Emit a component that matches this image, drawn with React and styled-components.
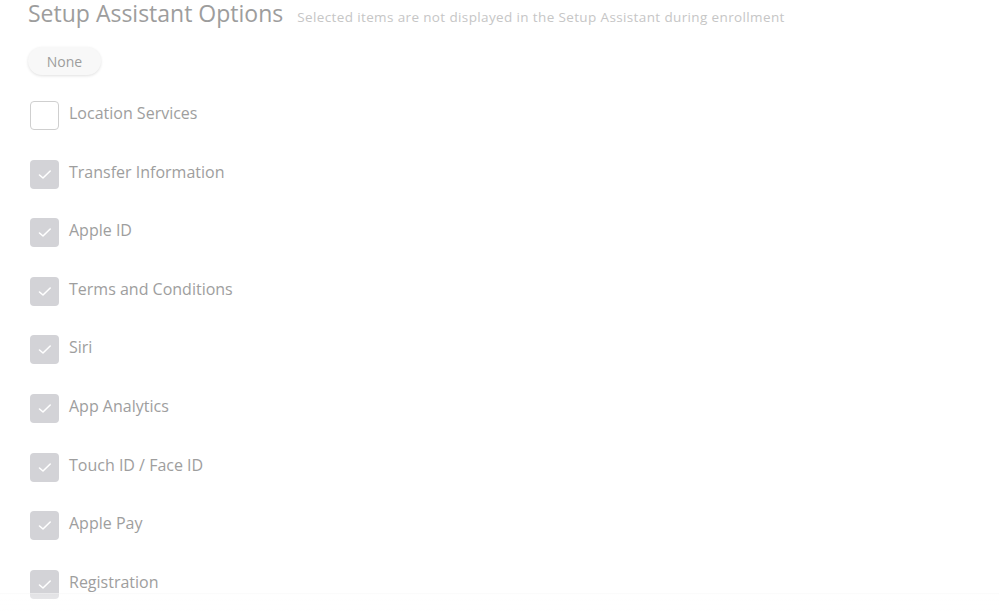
// Librairies.
import React, { useState } from 'react';
import styled, { createGlobalStyle } from 'styled-components';


// Global styles.
const GlobalStyle = createGlobalStyle`
    body {
        margin     : 0;
        background : #ffffff;
        font-family: "Open Sans", Lato, sans-serif;
    }
`;


// Styled Components.
const StyledPage = styled.div`
    position      : relative;
    height        : 614px;
    overflow      : hidden;
    padding       : 0 28px;
    box-sizing    : border-box;
`;

const StyledHeader = styled.div`
    display    : flex;
    align-items: baseline;
    gap        : 14px;
    height     : 30px;
`;

const StyledTitle = styled.h2`
    margin        : 0;
    font-size     : 23px;
    line-height   : 26px;
    font-weight   : 400;
    color         : #9d9d9d;
`;

const StyledSubtitle = styled.span`
    font-size     : 13.5px;
    letter-spacing: 0.37px;
    color         : #c6c6c6;
`;

const StyledNoneButton = styled.button`
    margin-top   : 17px;
    width        : 73px;
    height       : 28px;
    border       : none;
    border-radius: 14px;
    background   : #f8f8f8;
    box-shadow   : 0 1px 3px rgba(0, 0, 0, .12);
    font-family  : inherit;
    font-size    : 14px;
    color        : #9d9d9d;
    cursor       : pointer;
`;

const StyledList = styled.div`
    display       : flex;
    flex-direction: column;
    gap           : 29.6px;
    margin-top    : 26px;
    padding-left  : 2px;
`;

const StyledRow = styled.label`
    display    : flex;
    align-items: center;
    gap        : 10px;
    height     : 29px;
    cursor     : pointer;
`;

const StyledBox = styled.span`
    display        : flex;
    align-items    : center;
    justify-content: center;
    width          : 29px;
    height         : 29px;
    box-sizing     : border-box;
    border-radius  : 4px;
    background     : ${props => props.checked ? '#d3d3d7' : '#ffffff'};
    border         : ${props => props.checked ? 'none' : '1px solid #cfcfcf'};
`;

const StyledLabel = styled.span`
    font-size : 16px;
    color     : #9e9e9e;
    margin-top: -5px;
`;

const StyledFade = styled.div`
    position  : absolute;
    left      : 0;
    right     : 0;
    bottom    : 0;
    height    : 20px;
    background: linear-gradient(rgba(255, 255, 255, .35), rgba(255, 255, 255, .6));
    border-top: 1px solid rgba(0, 0, 0, .015);
`;


// Options.
const OPTIONS = [
    { name: 'Location Services',    checked: false },
    { name: 'Transfer Information', checked: true },
    { name: 'Apple ID',             checked: true },
    { name: 'Terms and Conditions', checked: true },
    { name: 'Siri',                 checked: true },
    { name: 'App Analytics',        checked: true },
    { name: 'Touch ID / Face ID',   checked: true },
    { name: 'Apple Pay',            checked: true },
    { name: 'Registration',         checked: true },
];


// Check mark.
function Check() {
    return (
        <svg width="14" height="11" viewBox="0 0 14 11" fill="none" style={{ marginLeft: 1 }}>
            <path d="M1.5 6 L5 9 L12.2 2" stroke="#ffffff" strokeWidth="1.6" strokeLinecap="round" strokeLinejoin="round" />
        </svg>
    );
}


// Setup Assistant.
function App() {

    // State
    const [options, setOptions] = useState(OPTIONS);

    const toggle = index => {
        setOptions(options.map((o, i) => i === index ? { ...o, checked: !o.checked } : o));
    };

    // Render
    return (
        <>
            <GlobalStyle />
            <StyledPage>
                <StyledHeader>
                    <StyledTitle>Setup Assistant Options</StyledTitle>
                    <StyledSubtitle>Selected items are not displayed in the Setup Assistant during enrollment</StyledSubtitle>
                </StyledHeader>

                <StyledNoneButton onClick={() => setOptions(options.map(o => ({ ...o, checked: false })))}>
                    None
                </StyledNoneButton>

                <StyledList>
                    {options.map((option, index) => (
                        <StyledRow key={option.name} onClick={() => toggle(index)}>
                            <StyledBox checked={option.checked}>
                                {option.checked && <Check />}
                            </StyledBox>
                            <StyledLabel>{option.name}</StyledLabel>
                        </StyledRow>
                    ))}
                </StyledList>

                <StyledFade />
            </StyledPage>
        </>
    );
};

export default App;
